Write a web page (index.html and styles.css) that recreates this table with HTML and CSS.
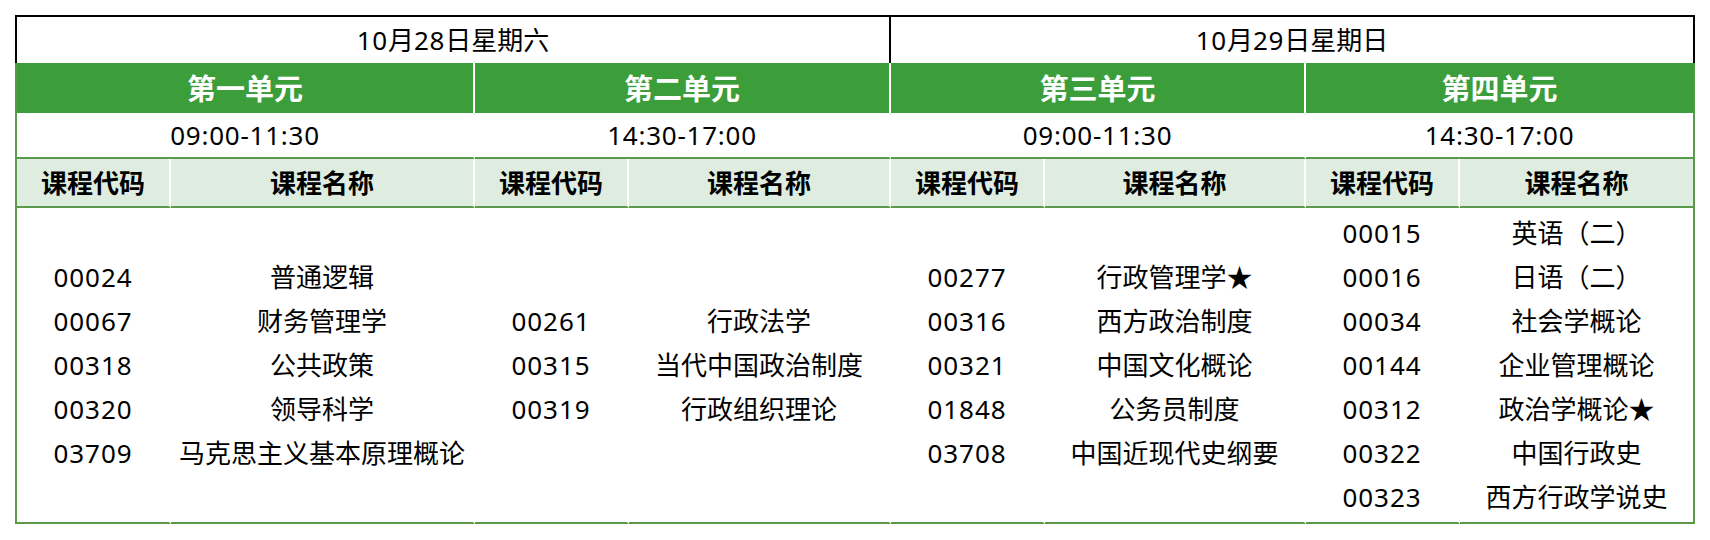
FILE: index.html
```html
<!DOCTYPE html>
<html lang="zh-CN">
<head>
<meta charset="utf-8">
<title>考试安排</title>
<link rel="stylesheet" href="styles.css">
</head>
<body>
<div class="sheet">
  <div class="date first"><span class="num">10</span>月<span class="num">28</span>日星期六</div>
  <div class="date last"><span class="num">10</span>月<span class="num">29</span>日星期日</div>

  <div class="unit first">第一单元</div>
  <div class="unit">第二单元</div>
  <div class="unit">第三单元</div>
  <div class="unit last">第四单元</div>

  <div class="time first">09:00-11:30</div>
  <div class="time">14:30-17:00</div>
  <div class="time">09:00-11:30</div>
  <div class="time last">14:30-17:00</div>

  <div class="head first">课程代码</div>
  <div class="head">课程名称</div>
  <div class="head">课程代码</div>
  <div class="head">课程名称</div>
  <div class="head">课程代码</div>
  <div class="head">课程名称</div>
  <div class="head">课程代码</div>
  <div class="head last">课程名称</div>

  <div class="body code first">
    <span>00024</span><span>00067</span><span>00318</span><span>00320</span><span>03709</span>
  </div>
  <div class="body">
    <span>普通逻辑</span><span>财务管理学</span><span>公共政策</span><span>领导科学</span><span>马克思主义基本原理概论</span>
  </div>
  <div class="body code">
    <span>00261</span><span>00315</span><span>00319</span>
  </div>
  <div class="body">
    <span>行政法学</span><span>当代中国政治制度</span><span>行政组织理论</span>
  </div>
  <div class="body code">
    <span>00277</span><span>00316</span><span>00321</span><span>01848</span><span>03708</span>
  </div>
  <div class="body">
    <span>行政管理学★</span><span>西方政治制度</span><span>中国文化概论</span><span>公务员制度</span><span>中国近现代史纲要</span>
  </div>
  <div class="body code">
    <span>00015</span><span>00016</span><span>00034</span><span>00144</span><span>00312</span><span>00322</span><span>00323</span>
  </div>
  <div class="body last">
    <span>英语（二）</span><span>日语（二）</span><span>社会学概论</span><span>企业管理概论</span><span>政治学概论★</span><span>中国行政史</span><span>西方行政学说史</span>
  </div>
</div>
</body>
</html>
```

FILE: styles.css
```css
html, body {
  margin: 0;
  padding: 0;
  background: #ffffff;
}

body {
  font-family: "Noto Sans", "Noto Sans CJK SC", sans-serif;
  color: #000000;
  font-size: 26px;
}

.sheet {
  display: grid;
  grid-template-columns: 156px 304px 154px 262px 154px 261px 154px 235px;
  grid-template-rows: 48px 50px 46px 49px 316px;
  width: 1680px;
  margin: 15px 0 0 15px;
}

.sheet > div {
  box-sizing: border-box;
  display: flex;
  align-items: center;
  justify-content: center;
  white-space: nowrap;
}

.num {
  letter-spacing: 0.75px;
}

/* date row */
.date {
  grid-column: span 4;
  border-top: 2px solid #000000;
  line-height: 1;
  padding-bottom: 1px;
}
.date.first {
  border-left: 2px solid #000000;
  border-right: 2px solid #000000;
}
.date.last {
  border-right: 2px solid #000000;
}

/* unit row */
.unit {
  grid-column: span 2;
  background: #3c9e3b;
  color: #ffffff;
  font-size: 29px;
  font-weight: 700;
  border-right: 2px solid #ffffff;
  line-height: 1;
}
.unit.first {
  border-left: 2px solid #4f9a45;
}
.unit.last {
  border-right: 2px solid #4f9a45;
}

/* time row */
.time {
  grid-column: span 2;
  border-bottom: 2px solid #5b9a4c;
  border-right: 2px solid #ffffff;
  line-height: 1;
  letter-spacing: 0.75px;
}
.time.first {
  border-left: 2px solid #5b9a4c;
}
.time.last {
  border-right: 2px solid #5b9a4c;
}

/* column header row */
.head {
  background: #deede0;
  font-weight: 700;
  border-bottom: 2px solid #5b9a4c;
  border-right: 2px solid #ffffff;
  line-height: 1;
}
.head.first {
  border-left: 2px solid #5b9a4c;
}
.head.last {
  border-right: 2px solid #5b9a4c;
}

/* body */
.sheet > .body {
  flex-direction: column;
  border-bottom: 2px solid #5b9a4c;
  border-right: 2px solid #ffffff;
}
.body.first {
  border-left: 2px solid #5b9a4c;
}
.sheet > .body.last {
  border-right: 2px solid #5b9a4c;
}
.body span {
  display: block;
  height: 44px;
  line-height: 44px;
  text-align: center;
}
.body.code span {
  letter-spacing: 0.9px;
}
```
